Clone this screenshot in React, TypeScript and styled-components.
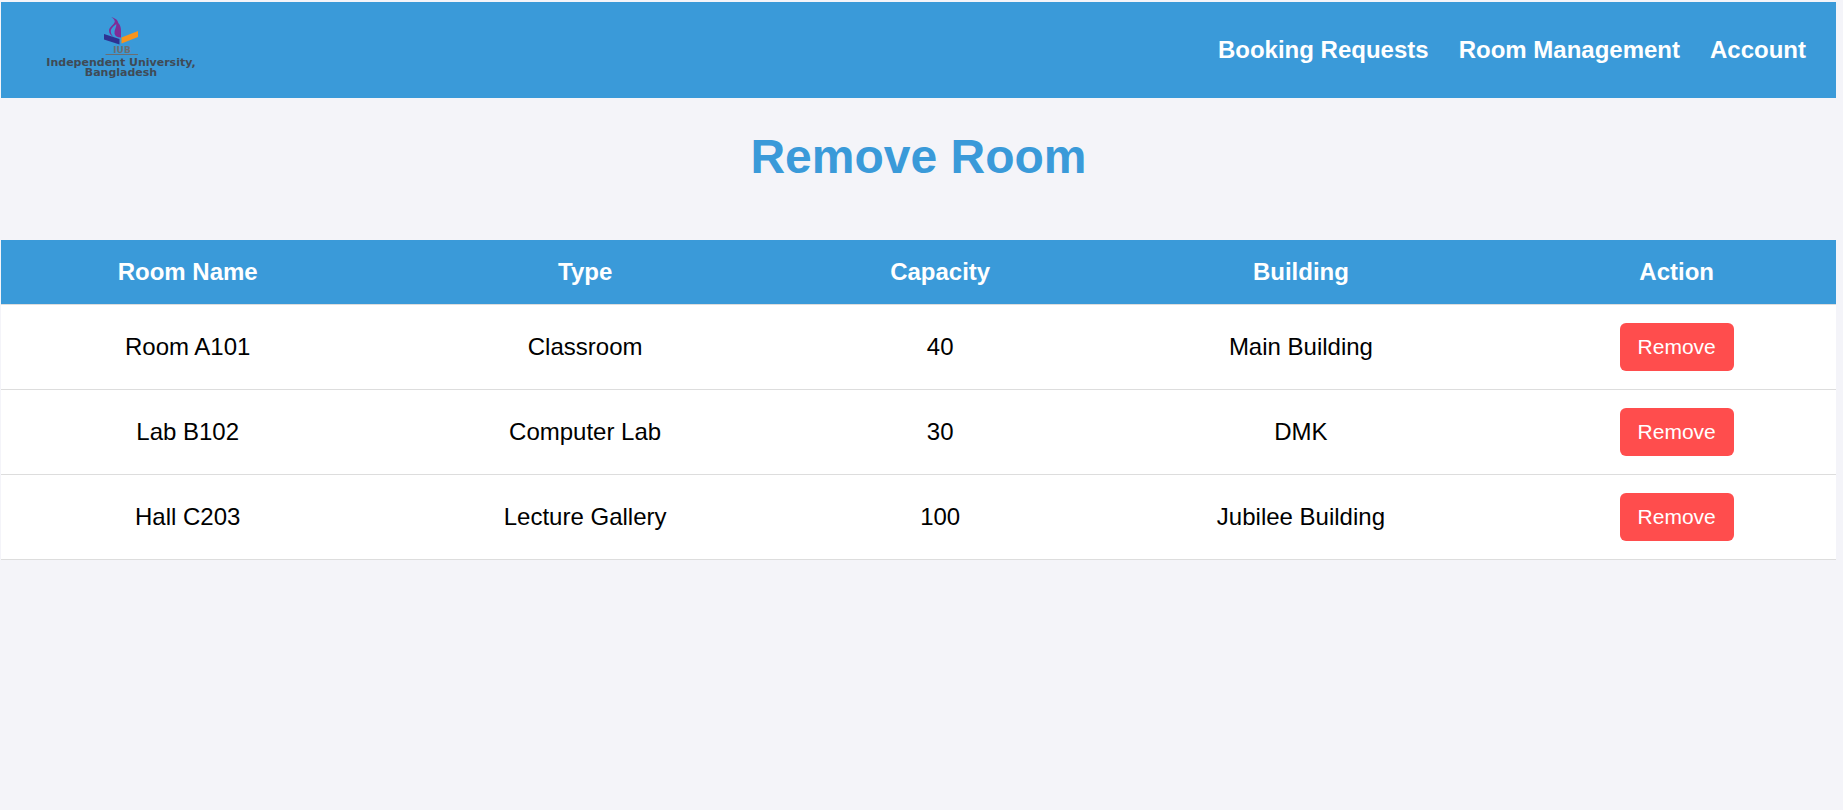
import React from 'react';
import styled, { createGlobalStyle } from 'styled-components';

const GlobalStyle = createGlobalStyle`
  * {
    box-sizing: border-box;
  }

  body {
    margin: 0;
    padding: 2px 7px 0 1px;
    background: #f4f4f9;
    color: #000;
    font-family: Arial, 'Liberation Sans', sans-serif;
    font-size: 24px;
    line-height: 28px;
  }
`;

const Header = styled.header`
  display: flex;
  align-items: center;
  justify-content: space-between;
  padding: 15px 30px;
  background: #3a9ad9;
`;

const LogoLink = styled.a`
  display: block;
`;

const LogoDrawing = styled.svg`
  display: block;
  width: 180px;
  height: 66px;
  overflow: visible;
  font-family: 'DejaVu Sans', sans-serif;
  font-weight: bold;
  text-anchor: middle;
`;

const Nav = styled.nav`
  display: flex;
  gap: 30px;
`;

const NavLink = styled.a`
  color: #fff;
  font-weight: bold;
  text-decoration: none;
`;

const Title = styled.h1`
  margin: 0;
  padding: 32px 0 56px;
  color: #3a9ad9;
  font-size: 48px;
  line-height: 54px;
  text-align: center;
`;

const Table = styled.table`
  width: 100%;
  border-collapse: collapse;
  background: #fff;
  text-align: center;
`;

const HeadCell = styled.th`
  padding: 18px;
  border-bottom: 1px solid #ddd;
  background: #3a9ad9;
  background-clip: padding-box;
  color: #fff;
`;

const Cell = styled.td`
  padding: 18px;
  border-bottom: 1px solid #ddd;
`;

const RemoveButton = styled.button`
  display: block;
  margin: 0 auto;
  padding: 12px 18px;
  border: none;
  border-radius: 6px;
  background: #ff4d4d;
  color: #fff;
  font-family: inherit;
  font-size: 21px;
  line-height: 24px;
  cursor: pointer;
`;

const navItems = ['Booking Requests', 'Room Management', 'Account'];

const columns = ['Room Name', 'Type', 'Capacity', 'Building', 'Action'];

const rooms = [
  { name: 'Room A101', type: 'Classroom', capacity: 40, building: 'Main Building' },
  { name: 'Lab B102', type: 'Computer Lab', capacity: 30, building: 'DMK' },
  { name: 'Hall C203', type: 'Lecture Gallery', capacity: 100, building: 'Jubilee Building' },
];

function Logo() {
  return (
    <LogoDrawing viewBox="0 0 180 66" role="img" aria-label="Independent University, Bangladesh">
      <path
        d="M80.300 0.200 C84 1 87 3 87.300 6 C89.500 8 90 11 90 14 V20.500 C86 20.500 84 19 83.500 16.500 C83 13 85.800 10 85.300 7 C83 9 80 11 79.800 14 C79.600 17 81.500 19 83 20.300 C80 19 78 16.500 78 13.500 C78 10 83.500 7.500 83.800 4.500 C83.800 2.500 82 1 80.300 0.200 Z"
        fill="#7f2c97"
      />
      <path d="M73 17 L88.500 22 V27.500 L73 22.500 Z" fill="#2e3192" />
      <path d="M90.500 20.500 L107 14 V20 L90.500 26.500 Z" fill="#f7941d" />
      <text x="91" y="36" fontSize="9" fill="#6b6e73">IUB</text>
      <path d="M74.500 37.500 H107" stroke="#6b6e73" strokeWidth="1" />
      <text x="90" y="49" fontSize="11" fill="#3f4a56">Independent University,</text>
      <text x="90" y="59" fontSize="11" fill="#3f4a56">Bangladesh</text>
    </LogoDrawing>
  );
}

export default function App() {
  return (
    <>
      <GlobalStyle />
      <Header>
        <LogoLink href="#">
          <Logo />
        </LogoLink>
        <Nav>
          {navItems.map((item) => (
            <NavLink key={item} href="#">{item}</NavLink>
          ))}
        </Nav>
      </Header>
      <main>
        <Title>Remove Room</Title>
        <Table>
          <thead>
            <tr>
              {columns.map((column) => (
                <HeadCell key={column} scope="col">{column}</HeadCell>
              ))}
            </tr>
          </thead>
          <tbody>
            {rooms.map((room) => (
              <tr key={room.name}>
                <Cell>{room.name}</Cell>
                <Cell>{room.type}</Cell>
                <Cell>{room.capacity}</Cell>
                <Cell>{room.building}</Cell>
                <Cell>
                  <RemoveButton type="button">Remove</RemoveButton>
                </Cell>
              </tr>
            ))}
          </tbody>
        </Table>
      </main>
    </>
  );
}
